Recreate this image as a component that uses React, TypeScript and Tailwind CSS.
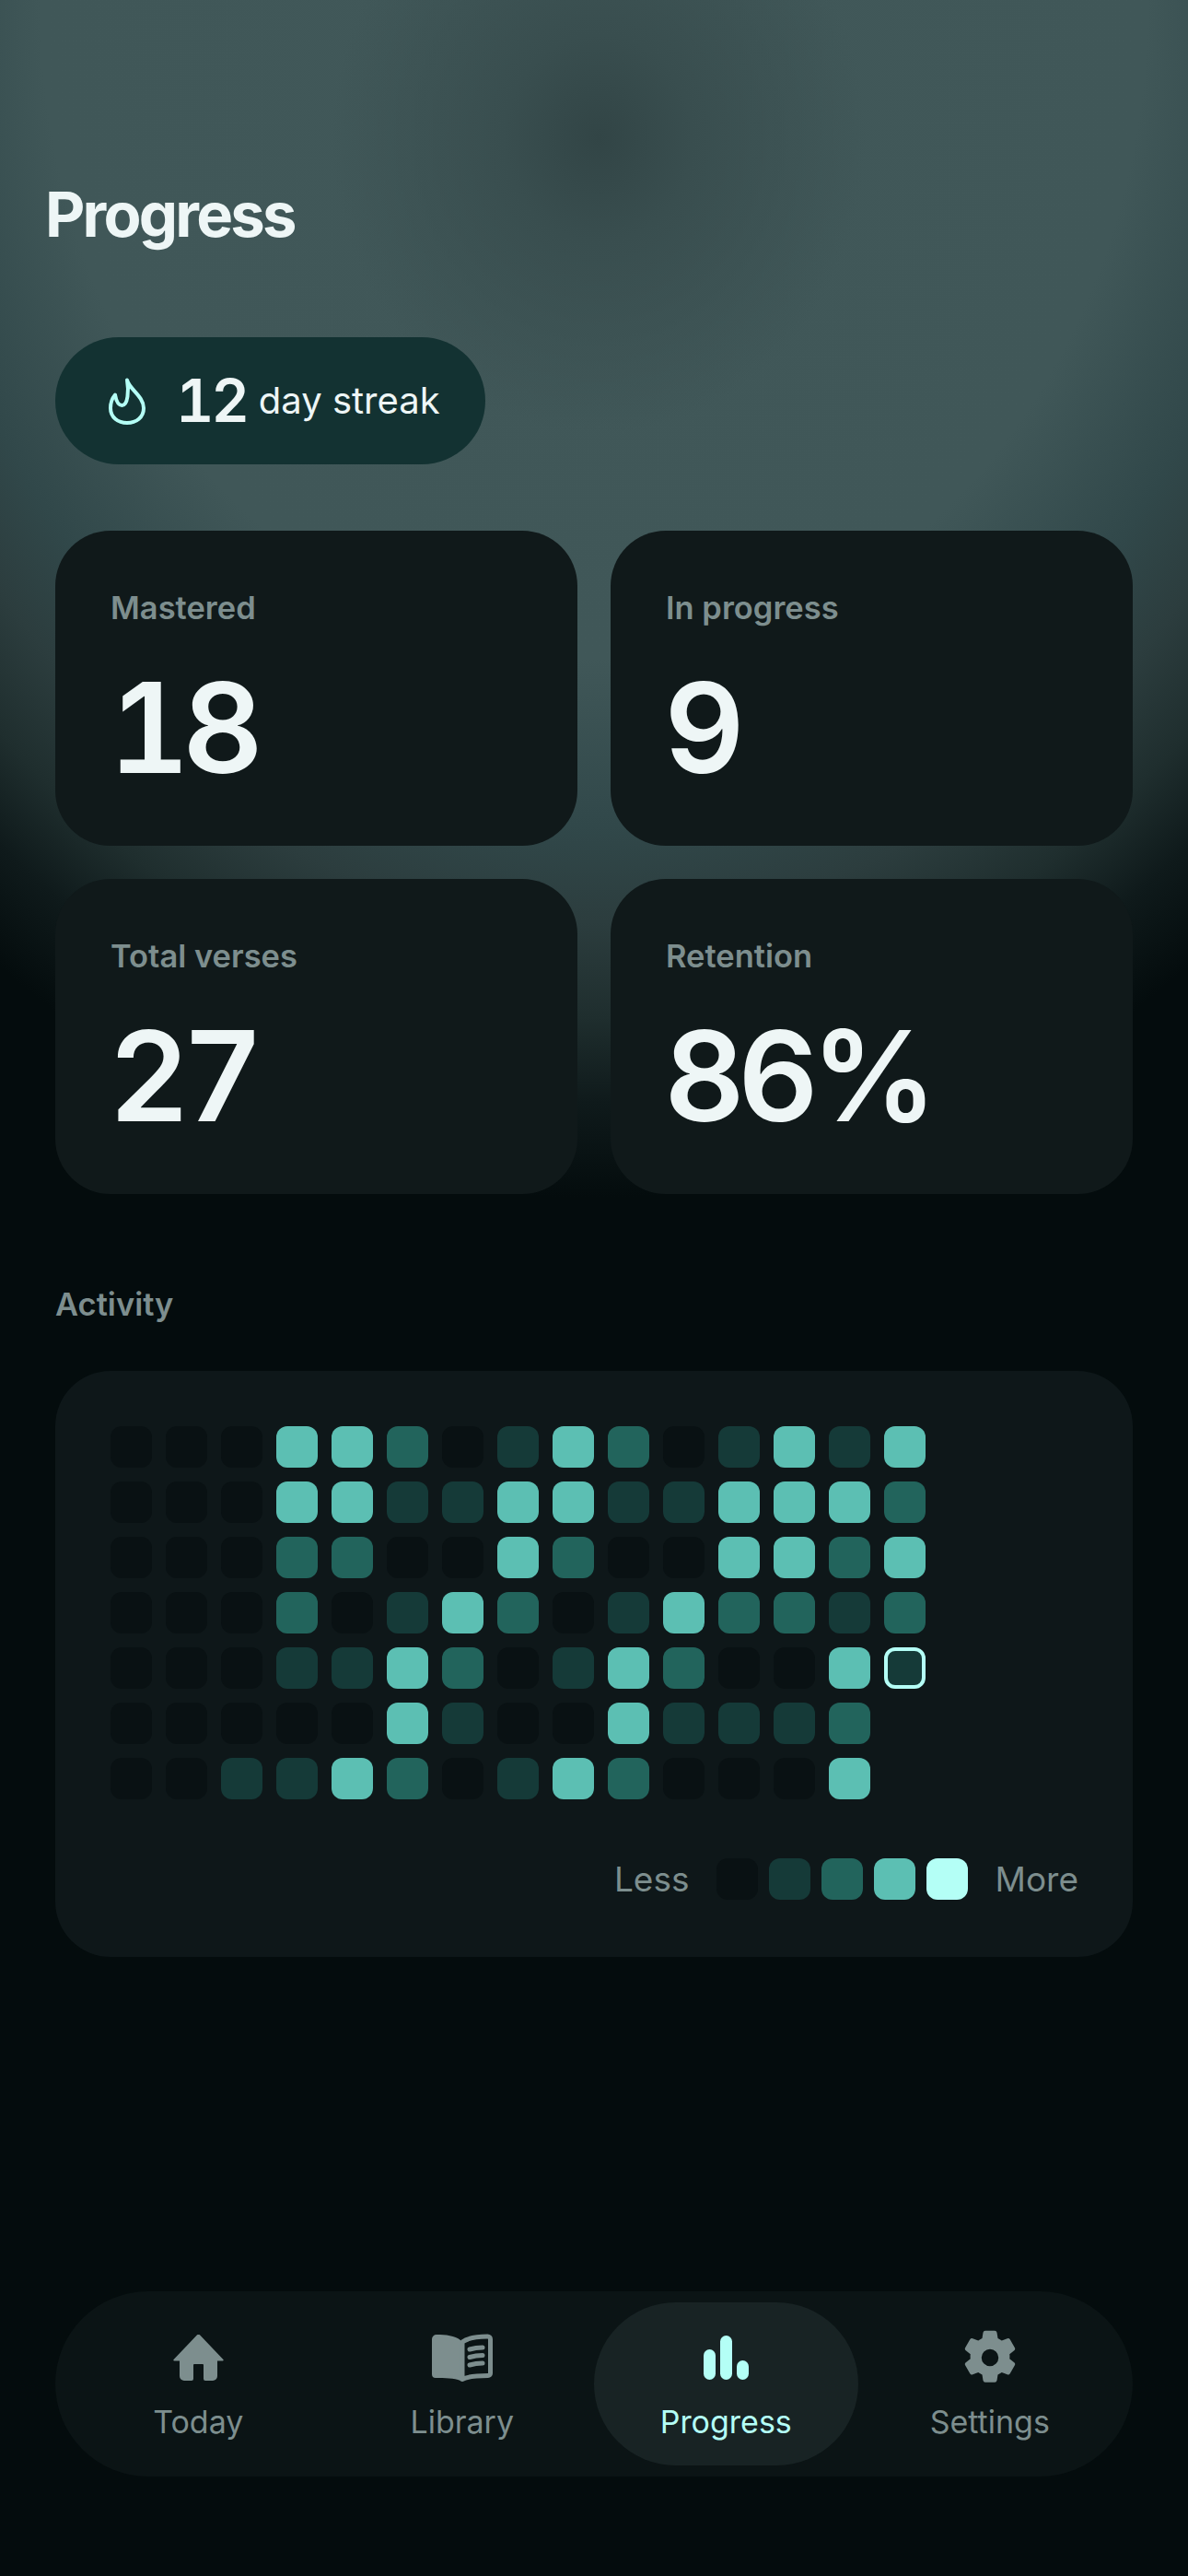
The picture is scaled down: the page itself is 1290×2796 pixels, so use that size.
const levels = [
  "bg-[#091113]",
  "bg-[#153a38]",
  "bg-[#22645c]",
  "bg-[#5cbfb3]",
  "bg-[#b4fff6]",
];

// -1 = no cell, 9 = today
const activity = [
  [0, 0, 0, 3, 3, 2, 0, 1, 3, 2, 0, 1, 3, 1, 3],
  [0, 0, 0, 3, 3, 1, 1, 3, 3, 1, 1, 3, 3, 3, 2],
  [0, 0, 0, 2, 2, 0, 0, 3, 2, 0, 0, 3, 3, 2, 3],
  [0, 0, 0, 2, 0, 1, 3, 2, 0, 1, 3, 2, 2, 1, 2],
  [0, 0, 0, 1, 1, 3, 2, 0, 1, 3, 2, 0, 0, 3, 9],
  [0, 0, 0, 0, 0, 3, 1, 0, 0, 3, 1, 1, 1, 2, -1],
  [0, 0, 1, 1, 3, 2, 0, 1, 3, 2, 0, 0, 0, 3, -1],
];

const stats = [
  { label: "Mastered", value: "18" },
  { label: "In progress", value: "9" },
  { label: "Total verses", value: "27" },
  { label: "Retention", value: "86%" },
];

function FlameIcon() {
  return (
    <svg viewBox="0 0 40 51" className="h-[51px] w-[40px] text-[#b4fff6]" fill="none">
      <path
        d="M20 2.500C22 12 38 20 38 33 38 43 30 49 20 49 10 49 2 43 2 33 2 27 4 22 7 18.500 8 24 10 30 14.500 30 21 30 22 14 20 2.500Z"
        stroke="currentColor"
        strokeWidth="4"
        strokeLinejoin="round"
      />
    </svg>
  );
}

function HomeIcon() {
  return (
    <svg viewBox="0 0 55 50" className="w-[55px] h-[50px]" fill="currentColor">
      <path d="M25.6.8a2.6 2.6 0 0 1 3.8 0L54.4 27a.8.8 0 0 1-.6 1.4H48V45a5 5 0 0 1-5 5h-8a2 2 0 0 1-2-2V33a1 1 0 0 0-1-1H23a1 1 0 0 0-1 1v15a2 2 0 0 1-2 2h-8a5 5 0 0 1-5-5V28.400H1.200A.8.8 0 0 1 .6 27Z" />
    </svg>
  );
}

function BookIcon() {
  return (
    <svg viewBox="0 0 66 52" className="w-[66px] h-[52px]" fill="none">
      <path d="M31 7C25 2 15 1 5 1a5 5 0 0 0-5 5v38a4 4 0 0 0 4 4c10 0 20 0 27 3Z" fill="currentColor" />
      <path d="M33 49.500c6-3 18-4 28-4a2.500 2.500 0 0 0 2.500-2.500V6A3 3 0 0 0 60.500 3C50 3 40 4 33 9Z" stroke="currentColor" strokeWidth="5" strokeLinejoin="round" />
      <path d="M41 17c5-1.500 9-2 14-2M41 25.500c5-1.500 9-2 14-2M41 34c5-1.500 9-2 14-2" stroke="currentColor" strokeWidth="5" strokeLinecap="round" />
    </svg>
  );
}

function BarsIcon() {
  return (
    <svg viewBox="0 0 49 48" className="w-[49px] h-[48px]" fill="currentColor">
      <rect x="0" y="15" width="13" height="33" rx="6.500" />
      <rect x="18" y="0" width="13" height="48" rx="6.500" />
      <rect x="36" y="27" width="13" height="21" rx="6.500" />
    </svg>
  );
}

function GearIcon() {
  return (
    <svg viewBox="0 0 24 24" className="w-[60px] h-[60px]" fill="currentColor">
      <path fillRule="evenodd" d="M10 .3h4a1 1 0 0 1 1 .8l.4 2.500c.6.3 1.200.6 1.700 1l2.400-.9a1 1 0 0 1 1.200.4l2 3.500a1 1 0 0 1-.2 1.300l-2 1.600a7.500 7.500 0 0 1 0 2l2 1.600a1 1 0 0 1 .2 1.300l-2 3.500a1 1 0 0 1-1.200.4l-2.400-.9c-.5.4-1.100.7-1.700 1l-.4 2.500a1 1 0 0 1-1 .8h-4a1 1 0 0 1-1-.8l-.4-2.500c-.6-.3-1.200-.6-1.700-1l-2.400.9a1 1 0 0 1-1.200-.4l-2-3.500a1 1 0 0 1 .2-1.300l2-1.600a7.500 7.500 0 0 1 0-2l-2-1.600a1 1 0 0 1-.2-1.300l2-3.500a1 1 0 0 1 1.200-.4l2.400.9c.5-.4 1.100-.7 1.700-1l.4-2.500a1 1 0 0 1 1-.8ZM12 8.300a3.700 3.700 0 1 0 0 7.400 3.700 3.700 0 0 0 0-7.400Z" />
    </svg>
  );
}

const tabs = [
  { label: "Today", icon: <HomeIcon /> },
  { label: "Library", icon: <BookIcon /> },
  { label: "Progress", icon: <BarsIcon />, active: true },
  { label: "Settings", icon: <GearIcon /> },
];

export default function App() {
  return (
    <div className="relative min-h-[2796px] w-full overflow-hidden bg-[#040c0d] bg-[radial-gradient(ellipse_1093px_1300px_at_645px_0px,#415859_0%,#405758_55%,#31484a_69%,#2c3d3e_77%,#1f2e2e_85%,#0f1a1b_92%,#040c0d_100%)] font-['Inter',sans-serif] text-[#eef6f6]">
      {/* Dark smudge behind the header */}
      <div className="absolute left-[360px] top-[-170px] h-[640px] w-[580px] rounded-full bg-[radial-gradient(closest-side,#324546_0%,#394e4f_35%,rgba(64,87,88,0)_100%)]" />

      <div className="relative flex flex-col">
        <h1 className="mt-[193px] pl-[49px] text-[67px] font-bold leading-[80px] tracking-[-2.800px]">
          Progress
        </h1>

        <div className="mt-[93px] px-[60px]">
          <div className="inline-flex h-[138px] items-center rounded-full bg-[#133232] pl-[58px] pr-[49px]">
            <FlameIcon />
            <span className="ml-[33px] text-[64px] font-semibold leading-none tracking-[-3px] tabular-nums">12</span>
            <span className="ml-[13px] text-[40px] leading-none">day streak</span>
          </div>
        </div>

        <div className="mt-[72px] grid grid-cols-2 gap-[36px] px-[60px]">
          {stats.map((s) => (
            <div key={s.label} className="h-[342px] rounded-[60px] bg-[#10191a] px-[60px] pt-[62px]">
              <div className="text-[34.500px] font-semibold leading-[44px] text-[#7d8e8e]">{s.label}</div>
              <div className="ml-[-2px] mt-[38px] text-[136px] font-semibold leading-[140px] tracking-[-8px] tabular-nums">{s.value}</div>
            </div>
          ))}
        </div>

        <div className="mt-[98px] pl-[60px] text-[34.500px] font-semibold leading-[44px] text-[#7d8e8e]">Activity</div>

        <div className="mx-[60px] mt-[50px] h-[636px] rounded-[60px] bg-[#0e1719] py-[60px] pl-[60px] pr-[59px]">
          <div className="grid w-max grid-cols-[repeat(15,45px)] gap-[15px]">
            {activity.flat().map((lvl, i) =>
              lvl === -1 ? (
                <div key={i} className="h-[45px]" />
              ) : lvl === 9 ? (
                <div key={i} className="h-[45px] rounded-[12px] border-[4px] border-[#b4fff6] bg-[#153a38]" />
              ) : (
                <div key={i} className={`h-[45px] rounded-[12px] ${levels[lvl]}`} />
              ),
            )}
          </div>
          <div className="mt-[64px] flex items-center justify-end text-[37px] leading-[45px] text-[#7d8e8e]">
            <span>Less</span>
            <div className="ml-[29px] mr-[30px] flex gap-[12px]">
              {levels.map((c) => (
                <div key={c} className={`h-[45px] w-[45px] rounded-[12px] ${c}`} />
              ))}
            </div>
            <span>More</span>
          </div>
        </div>

        <nav className="mx-[60px] mt-[363px] grid h-[201px] grid-cols-4 rounded-full bg-[#0b1415] p-[12px]">
          {tabs.map((t) => (
            <div
              key={t.label}
              className={`flex flex-col items-center justify-center rounded-full pt-[5px] ${t.active ? "bg-[#182324] text-[#b4fff6]" : "text-[#7d8e8e]"}`}
            >
              <div className="flex h-[60px] items-center">{t.icon}</div>
              <div className="mt-[18px] text-[34px] leading-[44px]">{t.label}</div>
            </div>
          ))}
        </nav>
      </div>
    </div>
  );
}
